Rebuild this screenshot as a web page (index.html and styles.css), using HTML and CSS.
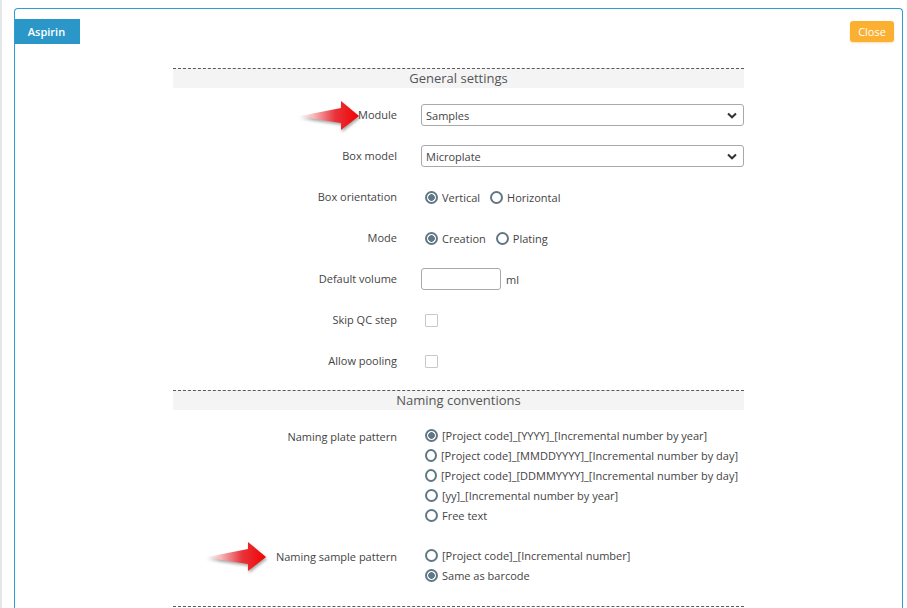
FILE: index.html
```html
<!DOCTYPE html>
<html>
<head>
<meta charset="utf-8">
<link rel="stylesheet" href="styles.css">
</head>
<body>
<div class="page">
  <div class="panel">
    <div class="panel-head">
      <button class="btn btn-aspirin">Aspirin</button>
      <button class="btn btn-close">Close</button>
    </div>
    <div class="form">
      <div class="section-title">General settings</div>
      <div class="fields">
        <div class="label has-arrow">
          <svg class="arrow" width="62" height="32" viewBox="0 0 62 32">
            <defs>
              <linearGradient id="ag1" x1="0" y1="0" x2="62" y2="0" gradientUnits="userSpaceOnUse">
                <stop offset="0" stop-color="#fde8e8" stop-opacity="0.2"/>
                <stop offset="0.25" stop-color="#f6b9bb"/>
                <stop offset="0.6" stop-color="#e8333a"/>
                <stop offset="1" stop-color="#f20000"/>
              </linearGradient>
            </defs>
            <path d="M0 16.5 L43 8 L43 1 L61 16 L43 30 L43 23 Z" fill="url(#ag1)"/>
          </svg>
          Module
        </div>
        <div class="select"><span>Samples</span><svg width="10" height="7" viewBox="0 0 10 7"><path d="M1 1.5 L5 5.3 L9 1.5" fill="none" stroke="#333" stroke-width="2"/></svg></div>

        <div class="label">Box model</div>
        <div class="select"><span>Microplate</span><svg width="10" height="7" viewBox="0 0 10 7"><path d="M1 1.5 L5 5.3 L9 1.5" fill="none" stroke="#333" stroke-width="2"/></svg></div>

        <div class="label">Box orientation</div>
        <div class="inline">
          <label class="opt"><input type="radio" name="orient" checked>Vertical</label>
          <label class="opt"><input type="radio" name="orient">Horizontal</label>
        </div>

        <div class="label">Mode</div>
        <div class="inline">
          <label class="opt"><input type="radio" name="mode" checked>Creation</label>
          <label class="opt"><input type="radio" name="mode">Plating</label>
        </div>

        <div class="label">Default volume</div>
        <div class="inline">
          <input class="text-input" type="text">
          <span class="unit">ml</span>
        </div>

        <div class="label">Skip QC step</div>
        <div class="inline"><input class="check" type="checkbox"></div>

        <div class="label">Allow pooling</div>
        <div class="inline"><input class="check" type="checkbox"></div>
      </div>

      <div class="section-title">Naming conventions</div>
      <div class="fields naming">
        <div class="label top">Naming plate pattern</div>
        <div class="options">
          <label class="opt"><input type="radio" name="plate" checked>[Project code]_[YYYY]_[Incremental number by year]</label>
          <label class="opt"><input type="radio" name="plate">[Project code]_[MMDDYYYY]_[Incremental number by day]</label>
          <label class="opt"><input type="radio" name="plate">[Project code]_[DDMMYYYY]_[Incremental number by day]</label>
          <label class="opt"><input type="radio" name="plate">[yy]_[Incremental number by year]</label>
          <label class="opt"><input type="radio" name="plate">Free text</label>
        </div>

        <div class="label top has-arrow">
          <svg class="arrow arrow2" width="62" height="32" viewBox="0 0 62 32">
            <defs>
              <linearGradient id="ag2" x1="0" y1="0" x2="62" y2="0" gradientUnits="userSpaceOnUse">
                <stop offset="0" stop-color="#fde8e8" stop-opacity="0.2"/>
                <stop offset="0.25" stop-color="#f6b9bb"/>
                <stop offset="0.6" stop-color="#e8333a"/>
                <stop offset="1" stop-color="#f20000"/>
              </linearGradient>
            </defs>
            <path d="M0 16.5 L43 8 L43 1 L61 16 L43 30 L43 23 Z" fill="url(#ag2)"/>
          </svg>
          Naming sample pattern
        </div>
        <div class="options">
          <label class="opt"><input type="radio" name="sample">[Project code]_[Incremental number]</label>
          <label class="opt"><input type="radio" name="sample" checked>Same as barcode</label>
        </div>
      </div>
      <div class="section-end"></div>
    </div>
  </div>
</div>
</body>
</html>
```

FILE: styles.css
```css
html, body {
  margin: 0;
  padding: 0;
  background: #ffffff;
  overflow: hidden;
  height: 100%;
}

body {
  font-family: "Open Sans", "Liberation Sans", sans-serif;
  font-size: 11px;
  color: #444;
}

.page {
  border-left: 2px solid #e4e7ea;
  height: 100%;
  box-sizing: border-box;
  padding-top: 8px;
}

.panel {
  box-sizing: border-box;
  margin: 0 4px 0 12px;
  border: 1px solid #2a9fd6;
  border-bottom: none;
  border-radius: 4px 4px 0 0;
  height: calc(100vh - 8px);
  overflow: hidden;
}

.panel-head {
  display: flex;
  justify-content: space-between;
  align-items: flex-start;
  padding: 10px 8px 0 0;
}

.btn {
  border: none;
  color: #fff;
  font-family: inherit;
  font-size: 11px;
  font-weight: 600;
  padding: 0;
  cursor: pointer;
}

.btn-aspirin {
  margin-left: -2px;
  width: 67px;
  height: 25px;
  background: #2b97c8;
}

.btn-close {
  margin-top: 2px;
  width: 44px;
  height: 21px;
  background: #fbb031;
  border-radius: 3px;
  box-shadow: 0 1px 2px rgba(240, 160, 30, 0.35);
  font-weight: 400;
}

.form {
  width: 571px;
  margin: 24px 0 0 158px;
}

.section-title {
  border-top: 1px dashed #5a5a5a;
  background: #f4f4f4;
  height: 19px;
  line-height: 19px;
  text-align: center;
  font-size: 13px;
  color: #555;
}

.section-end {
  border-top: 1px dashed #5a5a5a;
}

.fields {
  display: grid;
  grid-template-columns: 224px 323px;
  column-gap: 24px;
  row-gap: 19px;
  padding: 16px 0 18px;
}

.fields.naming {
  row-gap: 20px;
  padding: 15px 0 21px;
}

.label {
  text-align: right;
  align-self: center;
  color: #444;
  line-height: 14px;
}

.label.top {
  align-self: start;
  line-height: 20px;
  padding-top: 2px;
}

.has-arrow {
  position: relative;
}

.arrow {
  position: absolute;
  left: 125px;
  top: -8px;
  filter: drop-shadow(1px 2px 1.5px rgba(0, 0, 0, 0.35));
}

.arrow2 {
  left: 32px;
  top: -4px;
}

.select {
  box-sizing: border-box;
  height: 22px;
  border: 1px solid #a9a9a9;
  border-radius: 3px;
  display: flex;
  align-items: center;
  justify-content: space-between;
  padding: 0 6px 0 4px;
  color: #444;
  background: #fff;
}

.inline {
  display: flex;
  align-items: center;
  height: 22px;
}

.opt {
  display: flex;
  align-items: center;
  height: 20px;
  margin-right: 6px;
  color: #444;
  white-space: nowrap;
}

.options {
  display: flex;
  flex-direction: column;
}

input[type="radio"] {
  appearance: none;
  -webkit-appearance: none;
  box-sizing: border-box;
  width: 13px;
  height: 13px;
  margin: 0 4px 0 4px;
  border: 2px solid #607886;
  border-radius: 50%;
  background: #fff;
}

input[type="radio"]:checked {
  background: radial-gradient(circle, #607886 0 3px, #fff 3.6px);
}

.text-input {
  box-sizing: border-box;
  width: 80px;
  height: 22px;
  border: 1px solid #a9a9a9;
  border-radius: 3px;
  margin: 0;
  font-family: inherit;
}

.unit {
  margin-left: 5px;
}

.check {
  appearance: none;
  -webkit-appearance: none;
  box-sizing: border-box;
  width: 13px;
  height: 13px;
  margin: 0 0 0 4px;
  border: 1px solid #c8c8c8;
  border-radius: 1px;
  background: #fff;
}
```
